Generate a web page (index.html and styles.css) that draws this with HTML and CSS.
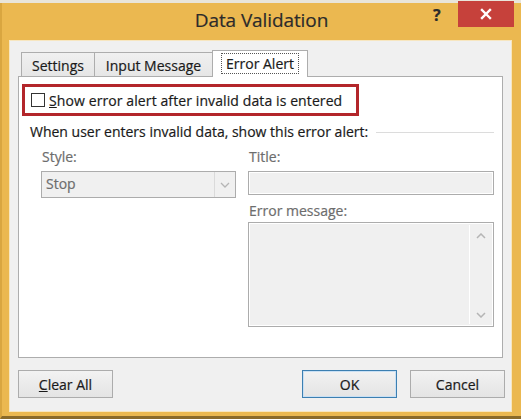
FILE: index.html
```html
<!DOCTYPE html>
<html>
<head>
<meta charset="utf-8">
<link rel="stylesheet" href="styles.css">
</head>
<body>
<div class="window">
  <div class="titlebar">
    <span class="title">Data Validation</span>
    <span class="help">?</span>
    <span class="close"><svg width="12" height="12" viewBox="0 0 12 12"><path d="M2 2 L10 10 M10 2 L2 10" stroke="#fff" stroke-width="2.4" stroke-linecap="square"/></svg></span>
  </div>
  <div class="client">
    <div class="tabs">
      <div class="tab t-settings">Settings</div>
      <div class="tab t-input">Input Message</div>
      <div class="tab active"><span class="focus">Error Alert</span></div>
    </div>
    <div class="panel">
      <div class="highlight">
        <span class="checkbox"></span>
        <span class="cb-label"><u>S</u>how error alert after invalid data is entered</span>
      </div>
      <div class="group-head">
        <span>When user enters invalid data, show this error alert:</span>
        <span class="rule"></span>
      </div>
      <div class="fields">
        <div class="col-left">
          <div class="lbl">Style:</div>
          <div class="select">
            <span class="sel-text">Stop</span>
            <span class="sel-arrow"><svg width="10" height="6" viewBox="0 0 10 6"><path d="M1 1 L5 5 L9 1" fill="none" stroke="#b5b5b5" stroke-width="1.3"/></svg></span>
          </div>
        </div>
        <div class="col-right">
          <div class="lbl">Title:</div>
          <div class="input"></div>
          <div class="lbl lbl-msg">Error message:</div>
          <div class="textarea">
            <div class="ta-body"></div>
            <div class="scroll">
              <svg width="10" height="6" viewBox="0 0 10 6"><path d="M1 5 L5 1 L9 5" fill="none" stroke="#b5b5b5" stroke-width="1.5"/></svg>
              <svg width="10" height="6" viewBox="0 0 10 6"><path d="M1 1 L5 5 L9 1" fill="none" stroke="#b5b5b5" stroke-width="1.5"/></svg>
            </div>
          </div>
        </div>
      </div>
    </div>
    <div class="buttons">
      <div class="btn"><u>C</u>lear All</div>
      <div class="spacer"></div>
      <div class="btn default">OK</div>
      <div class="btn">Cancel</div>
    </div>
  </div>
</div>
</body>
</html>
```
FILE: styles.css
```css
* { box-sizing: border-box; }
html, body { margin: 0; padding: 0; }
body {
  width: 521px;
  height: 419px;
  background: #e9e5da;
  padding-top: 3px;
  font-family: "Open Sans", "Noto Sans", sans-serif;
  -webkit-text-stroke: 0.2px;
  overflow: hidden;
}
.window {
  width: 521px;
  height: 416px;
  background: #ebb850;
  border-left: 2px solid #d9a640;
  border-bottom: 3px solid #8a6a2a;
  display: flex;
  flex-direction: column;
}
.titlebar {
  height: 37px;
  position: relative;
  display: flex;
  justify-content: center;
}
.title {
  font-size: 19px;
  color: #2b2b2b;
  margin-top: 4px;
  letter-spacing: -0.1px;
}
.help {
  position: absolute;
  left: 431px;
  top: 1px;
  font-weight: bold;
  font-size: 16px;
  color: #2b2b2b;
}
.close {
  position: absolute;
  left: 456px;
  top: -2px;
  width: 56px;
  height: 26px;
  background: #c6413b;
  display: flex;
  align-items: center;
  justify-content: center;
}
.client {
  margin: 0 9px 0 7px;
  height: 372px;
  background: #f0f0f0;
  border: 1px solid #f7e6c0;
  padding: 9px 8px 13px 8px;
  display: flex;
  flex-direction: column;
}
.tabs {
  display: flex;
  align-items: flex-end;
  height: 27px;
  padding-left: 3px;
  margin-bottom: -1px;
  position: relative;
  z-index: 1;
}
.tab {
  height: 24px;
  border: 1px solid #adadad;
  border-bottom: none;
  background: linear-gradient(#f0f0f0, #e6e6e6);
  font-size: 14px;
  color: #1a1a1a;
  display: flex;
  align-items: center;
  justify-content: center;
  margin-bottom: 1px;
  padding-top: 2px;
}
.t-settings { width: 74px; }
.t-input { width: 118px; border-left: none; }
.tab.active {
  height: 27px;
  width: 96px;
  margin-left: -1px;
  margin-bottom: 0;
  background: #fff;
  padding-top: 0;
  padding-bottom: 2px;
}
.focus {
  border: 1px dotted #555;
  padding: 0 4px;
  line-height: 19px;
}
.panel {
  flex: 0 0 282px;
  background: #fff;
  border: 1px solid #adadad;
  padding: 7px 0 0 3px;
}
.highlight {
  width: 337px;
  height: 32px;
  border: 3px solid #b3262a;
  display: flex;
  align-items: center;
  padding-left: 6px;
}
.checkbox {
  width: 14px;
  height: 14px;
  border: 1px solid #333;
  background: #fff;
  margin-right: 4px;
}
.cb-label {
  font-size: 14px;
  letter-spacing: 0.1px;
  color: #1a1a1a;
}
.group-head {
  display: flex;
  align-items: center;
  margin: 6px 8px 0 8px;
  font-size: 14px;
  color: #1a1a1a;
}
.rule {
  flex: 1;
  height: 1px;
  background: #dcdcdc;
  margin-left: 8px;
  margin-top: 2px;
}
.fields {
  display: flex;
  margin-top: 6px;
  padding-left: 19px;
}
.lbl {
  font-size: 14px;
  color: #6d6d6d;
  height: 20px;
  line-height: 20px;
  padding-left: 1px;
}
.col-left { width: 195px; }
.col-right { margin-left: 12px; width: 246px; }
.select {
  margin-top: 4px;
  height: 27px;
  border: 1px solid #acacac;
  background: #f0f0f0;
  display: flex;
}
.sel-text {
  flex: 1;
  font-size: 14px;
  color: #6d6d6d;
  padding-left: 4px;
  line-height: 24px;
}
.sel-arrow {
  width: 21px;
  border-left: 1px solid #dadada;
  display: flex;
  align-items: center;
  justify-content: center;
}
.input {
  margin-top: 4px;
  height: 24px;
  border: 1px solid #acacac;
  background: #f0f0f0;
  box-shadow: inset 0 0 0 1px #fff;
}
.lbl-msg { margin-top: 6px; }
.textarea {
  margin-top: 1px;
  height: 105px;
  border: 1px solid #acacac;
  background: #f0f0f0;
  box-shadow: inset 0 0 0 1px #fff;
  display: flex;
  padding: 2px;
}
.ta-body { flex: 1; }
.scroll {
  width: 22px;
  border-left: 1px solid #fff;
  display: flex;
  flex-direction: column;
  justify-content: space-between;
  align-items: center;
  padding: 8px 0 6px;
}
.buttons {
  display: flex;
  margin-top: 12px;
  margin-right: -2px;
  gap: 13px;
}
.spacer { flex: 1; }
.btn {
  width: 95px;
  height: 28px;
  border: 1px solid #acacac;
  background: linear-gradient(#f2f2f2, #e4e4e4);
  font-size: 14px;
  color: #1a1a1a;
  display: flex;
  align-items: center;
  justify-content: center;
}
.btn.default {
  border-color: #3c7fb1;
  box-shadow: inset 0 0 0 1px #c9e0f4;
}
```
